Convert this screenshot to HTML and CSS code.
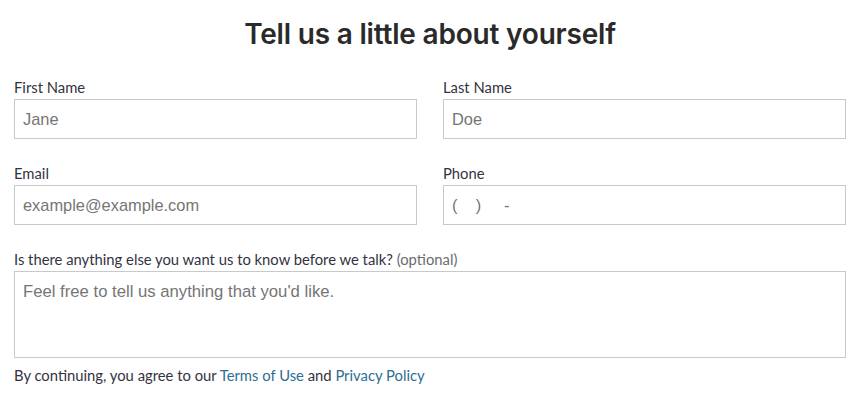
FILE: index.html
```html
<!DOCTYPE html>
<html>
<head>
<meta charset="utf-8">
<link rel="stylesheet" href="styles.css">
</head>
<body>
<div class="page">
  <h1 class="title">Tell us a little about yourself</h1>
  <div class="grid">
    <div class="field">
      <label class="label">First Name</label>
      <input class="input" type="text" placeholder="Jane">
    </div>
    <div class="field">
      <label class="label">Last Name</label>
      <input class="input" type="text" placeholder="Doe">
    </div>
    <div class="field">
      <label class="label">Email</label>
      <input class="input" type="text" placeholder="example@example.com">
    </div>
    <div class="field">
      <label class="label">Phone</label>
      <input class="input phone" type="text" placeholder="(&nbsp;&nbsp;&nbsp;&nbsp;)&nbsp;&nbsp;&nbsp;&nbsp;&nbsp;-">
    </div>
    <div class="field wide">
      <label class="label">Is there anything else you want us to know before we talk? <span class="optional">(optional)</span></label>
      <textarea class="textarea" placeholder="Feel free to tell us anything that you'd like."></textarea>
    </div>
  </div>
  <p class="legal">By continuing, you agree to our <a class="link" href="#">Terms of Use</a> and <a class="link" href="#">Privacy Policy</a></p>
</div>
</body>
</html>
```
FILE: styles.css
```css
html, body {
  margin: 0;
  padding: 0;
  background: #fff;
}
.page {
  padding: 0 16px 0 14px;
  font-family: "Lato", "Liberation Sans", sans-serif;
  color: #33333f;
}
.title {
  margin: 0;
  padding-top: 16px;
  height: 78px;
  box-sizing: border-box;
  text-align: center;
  font-family: "Inter", "Liberation Sans", sans-serif;
  font-weight: 600;
  font-size: 28px;
  line-height: 36px;
  color: #2a2a2a;
  letter-spacing: -0.2px;
}
.grid {
  display: grid;
  grid-template-columns: 1fr 1fr;
  column-gap: 26px;
  row-gap: 25px;
}
.field {
  display: flex;
  flex-direction: column;
}
.field.wide {
  grid-column: 1 / 3;
}
.label {
  font-size: 14.8px;
  line-height: 18px;
  margin-bottom: 3px;
  color: #33333f;
}
.optional {
  color: #6b6b6b;
}
.input, .textarea {
  box-sizing: border-box;
  border: 1px solid #c9c9c9;
  border-radius: 0;
  margin: 0;
  padding: 0 8px;
  font-family: "Liberation Sans", Arial, sans-serif;
  font-size: 16.4px;
  color: #333;
  background: #fff;
  outline: none;
}
.input {
  height: 40px;
}
.textarea {
  height: 87px;
  padding: 11px 8px;
  resize: none;
  line-height: 18px;
  font-size: 16.7px;
}
.input::placeholder, .textarea::placeholder {
  color: #757575;
  opacity: 1;
}
.legal {
  margin: 8px 0 0;
  font-size: 14.8px;
  line-height: 18px;
  color: #33333f;
}
.link {
  color: #2d6e93;
  text-decoration: none;
}
```
